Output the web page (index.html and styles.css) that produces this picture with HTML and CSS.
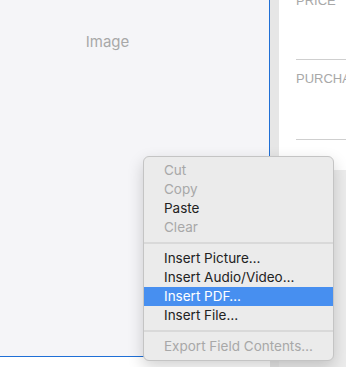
FILE: index.html
```html
<!DOCTYPE html>
<html lang="en">
  <head>
    <meta charset="UTF-8" />
    <title>Field Context Menu</title>
    <link rel="stylesheet" href="styles.css">
  </head>
  <body>
    <div class="layout">
      <div class="image-field">
        <span class="image-label">Image</span>
      </div>
      <div class="gutter"></div>
      <div class="side">
        <div class="fields">
          <div class="field">
            <span class="field-label">Price</span>
          </div>
          <div class="field">
            <span class="field-label">Purchase Date</span>
          </div>
        </div>
      </div>
    </div>

    <ul class="context-menu">
      <li class="menu-item disabled">Cut</li>
      <li class="menu-item disabled">Copy</li>
      <li class="menu-item">Paste</li>
      <li class="menu-item disabled">Clear</li>
      <li class="menu-separator"></li>
      <li class="menu-item">Insert Picture…</li>
      <li class="menu-item">Insert Audio/Video…</li>
      <li class="menu-item active">Insert PDF…</li>
      <li class="menu-item">Insert File…</li>
      <li class="menu-separator"></li>
      <li class="menu-item disabled">Export Field Contents…</li>
    </ul>
  </body>
</html>
```

FILE: styles.css
```css
:root {
  --field-bg: #f5f5f8;
  --focus: #1f6fd6;
  --gutter: #e6e6e6;
  --window-bg: #ececec;
  --menu-bg: #ebebeb;
  --menu-border: #c4c4c4;
  --text: #222222;
  --text-muted: #a8a8a8;
  --highlight: #478ff0;
}

* {
  margin: 0;
  padding: 0;
  box-sizing: border-box;
}

body {
  width: 346px;
  height: 367px;
  overflow: hidden;
  background: white;
  font-family: Inter, "Liberation Sans", sans-serif;
  -webkit-font-smoothing: antialiased;
}

.layout {
  display: flex;
  height: 367px;
}

.image-field {
  width: 270px;
  height: 357px;
  flex-shrink: 0;
  background: var(--field-bg);
  border-right: 1px solid var(--focus);
  border-bottom: 1px solid var(--focus);
  display: flex;
  justify-content: center;
  padding-top: 33px;
}

.image-label {
  padding-right: 54px;
  color: var(--text-muted);
  font-size: 15px;
  line-height: 18px;
}

.gutter {
  width: 9px;
  flex-shrink: 0;
  background: var(--gutter);
}

.side {
  flex: 1;
  min-width: 0;
  background: var(--window-bg);
}

.fields {
  height: 170px;
  background: white;
  padding-left: 17px;
  overflow: hidden;
}

.field {
  height: 80px;
  border-bottom: 1px solid #cfcfcf;
  padding-top: 12px;
  white-space: nowrap;
  overflow: hidden;
  font-family: "Liberation Sans", sans-serif;
  font-size: 13px;
  line-height: 14px;
}

/* label of the first field is scrolled half out of view */
.field:first-child {
  margin-top: -20px;
  padding-top: 14px;
}

.field-label {
  color: var(--text-muted);
  text-transform: uppercase;
}

.context-menu {
  position: absolute;
  left: 143px;
  top: 156px;
  width: 191px;
  padding: 4px 0;
  list-style: none;
  background: var(--menu-bg);
  border: 1px solid var(--menu-border);
  border-radius: 6px;
  box-shadow: 0 6px 16px rgba(0, 0, 0, 0.18);
}

.menu-item {
  height: 19px;
  line-height: 19px;
  padding-left: 20px;
  font-size: 13.5px;
  color: var(--text);
  white-space: nowrap;
}

.menu-item.disabled {
  color: var(--text-muted);
}

.menu-item.active {
  background: var(--highlight);
  color: white;
}

.menu-separator {
  height: 2px;
  margin: 5px 0;
  background: #d9d9d9;
}
```
